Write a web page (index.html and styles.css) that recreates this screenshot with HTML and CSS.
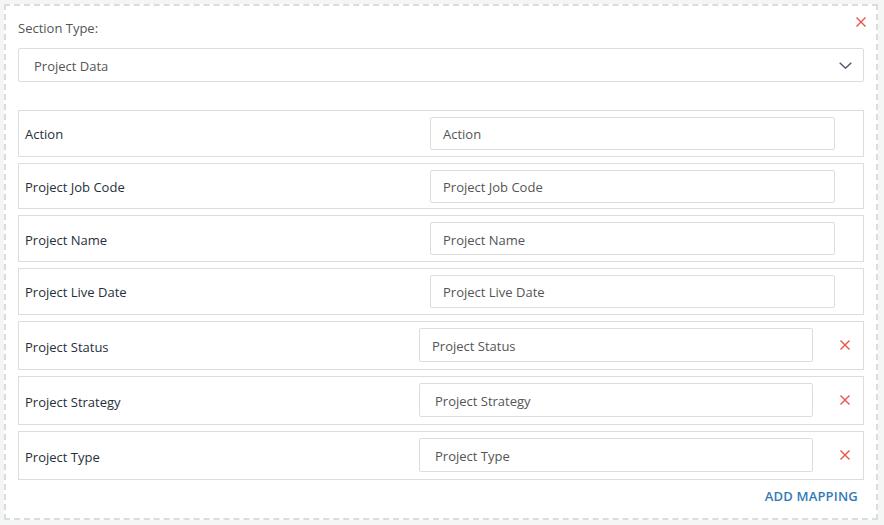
FILE: index.html
```html
<!DOCTYPE html>
<html lang="en">
<head>
<meta charset="utf-8">
<title>Section Mapping</title>
<link rel="stylesheet" href="styles.css">
</head>
<body>
<div class="section">
  <button class="close-section" aria-label="Remove section">
    <svg width="10" height="10" viewBox="0 0 10 10"><path d="M0.5 0.5L9.5 9.5M9.5 0.5L0.5 9.5" stroke="#e8524a" stroke-width="1.4" fill="none"/></svg>
  </button>
  <div class="field-label">Section Type:</div>
  <div class="select">
    <span>Project Data</span>
    <svg class="chevron" width="13" height="7" viewBox="0 0 13 7"><path d="M0.7 0.7L6.5 6.2L12.3 0.7" stroke="#4a5566" stroke-width="1.4" fill="none"/></svg>
  </div>

  <div class="mappings">
    <div class="map-row">
      <div class="map-label">Action</div>
      <div class="map-input fixed">Action</div>
      <div class="trail"></div>
    </div>
    <div class="map-row">
      <div class="map-label">Project Job Code</div>
      <div class="map-input fixed">Project Job Code</div>
      <div class="trail"></div>
    </div>
    <div class="map-row">
      <div class="map-label">Project Name</div>
      <div class="map-input fixed">Project Name</div>
      <div class="trail"></div>
    </div>
    <div class="map-row">
      <div class="map-label">Project Live Date</div>
      <div class="map-input fixed">Project Live Date</div>
      <div class="trail"></div>
    </div>
    <div class="map-row custom">
      <div class="map-label">Project Status</div>
      <div class="map-input removable">Project Status</div>
      <div class="remove"><svg width="10" height="10" viewBox="0 0 10 10"><path d="M0.5 0.5L9.5 9.5M9.5 0.5L0.5 9.5" stroke="#e8524a" stroke-width="1.4" fill="none"/></svg></div>
    </div>
    <div class="map-row custom">
      <div class="map-label">Project Strategy</div>
      <div class="map-input removable wide-pad">Project Strategy</div>
      <div class="remove"><svg width="10" height="10" viewBox="0 0 10 10"><path d="M0.5 0.5L9.5 9.5M9.5 0.5L0.5 9.5" stroke="#e8524a" stroke-width="1.4" fill="none"/></svg></div>
    </div>
    <div class="map-row custom">
      <div class="map-label">Project Type</div>
      <div class="map-input removable wide-pad">Project Type</div>
      <div class="remove"><svg width="10" height="10" viewBox="0 0 10 10"><path d="M0.5 0.5L9.5 9.5M9.5 0.5L0.5 9.5" stroke="#e8524a" stroke-width="1.4" fill="none"/></svg></div>
    </div>
  </div>

  <div class="actions"><a class="add-mapping">ADD MAPPING</a></div>
</div>
</body>
</html>
```
FILE: styles.css
```css
* { box-sizing: border-box; }
html, body { margin: 0; padding: 0; }
body {
  background: #f4f5f5;
  font-family: "Open Sans", "Noto Sans", "Liberation Sans", sans-serif;
  font-size: 13px;
  color: #333;
}
.section {
  position: relative;
  margin: 4px;
  width: 874px;
  height: 516px;
  background: #fff;
  border: 2px dashed #dcdcdc;
  padding: 13px 12px 0 12px;
}
.close-section {
  position: absolute;
  top: 11px;
  right: 10px;
  border: 0;
  background: none;
  padding: 0;
  width: 10px;
  height: 10px;
  line-height: 0;
}
.field-label {
  color: #555;
  line-height: 18px;
  height: 18px;
}
.select {
  margin-top: 11px;
  height: 34px;
  border: 1px solid #ddd;
  border-radius: 2px;
  display: flex;
  align-items: center;
  justify-content: space-between;
  padding: 1px 11px 0 15px;
  color: #555;
}
.chevron { display: block; margin-top: 0; }
.mappings {
  margin-top: 28px;
  display: flex;
  flex-direction: column;
  gap: 6px;
}
.map-row {
  height: 46.7px;
  border: 1px solid #ddd;
  display: flex;
  align-items: center;
  padding: 0 0 0 6px;
}
.map-row.custom { height: 49px; }
.map-label {
  flex: 1;
  color: #26303c;
  padding-top: 2px;
}
.map-row.custom .map-label { padding-top: 3px; }
.map-input {
  height: 33px;
  border: 1px solid #ddd;
  border-radius: 2px;
  display: flex;
  align-items: center;
  padding: 2px 12px 0 12px;
  color: #555;
}
.map-input.fixed { width: 405px; }
.map-input.removable { width: 394px; height: 34px; padding-top: 1px; }
.map-input.wide-pad { padding-left: 15px; }
.trail { width: 28px; }
.remove {
  width: 50px;
  padding-left: 27px;
  line-height: 0;
}
.remove svg { display: block; }
.actions {
  display: flex;
  justify-content: flex-end;
  padding: 6px 6px 0 0;
}
.add-mapping {
  color: #337ab7;
  font-weight: 600;
  letter-spacing: 0.2px;
  line-height: 20px;
  cursor: pointer;
}
```
